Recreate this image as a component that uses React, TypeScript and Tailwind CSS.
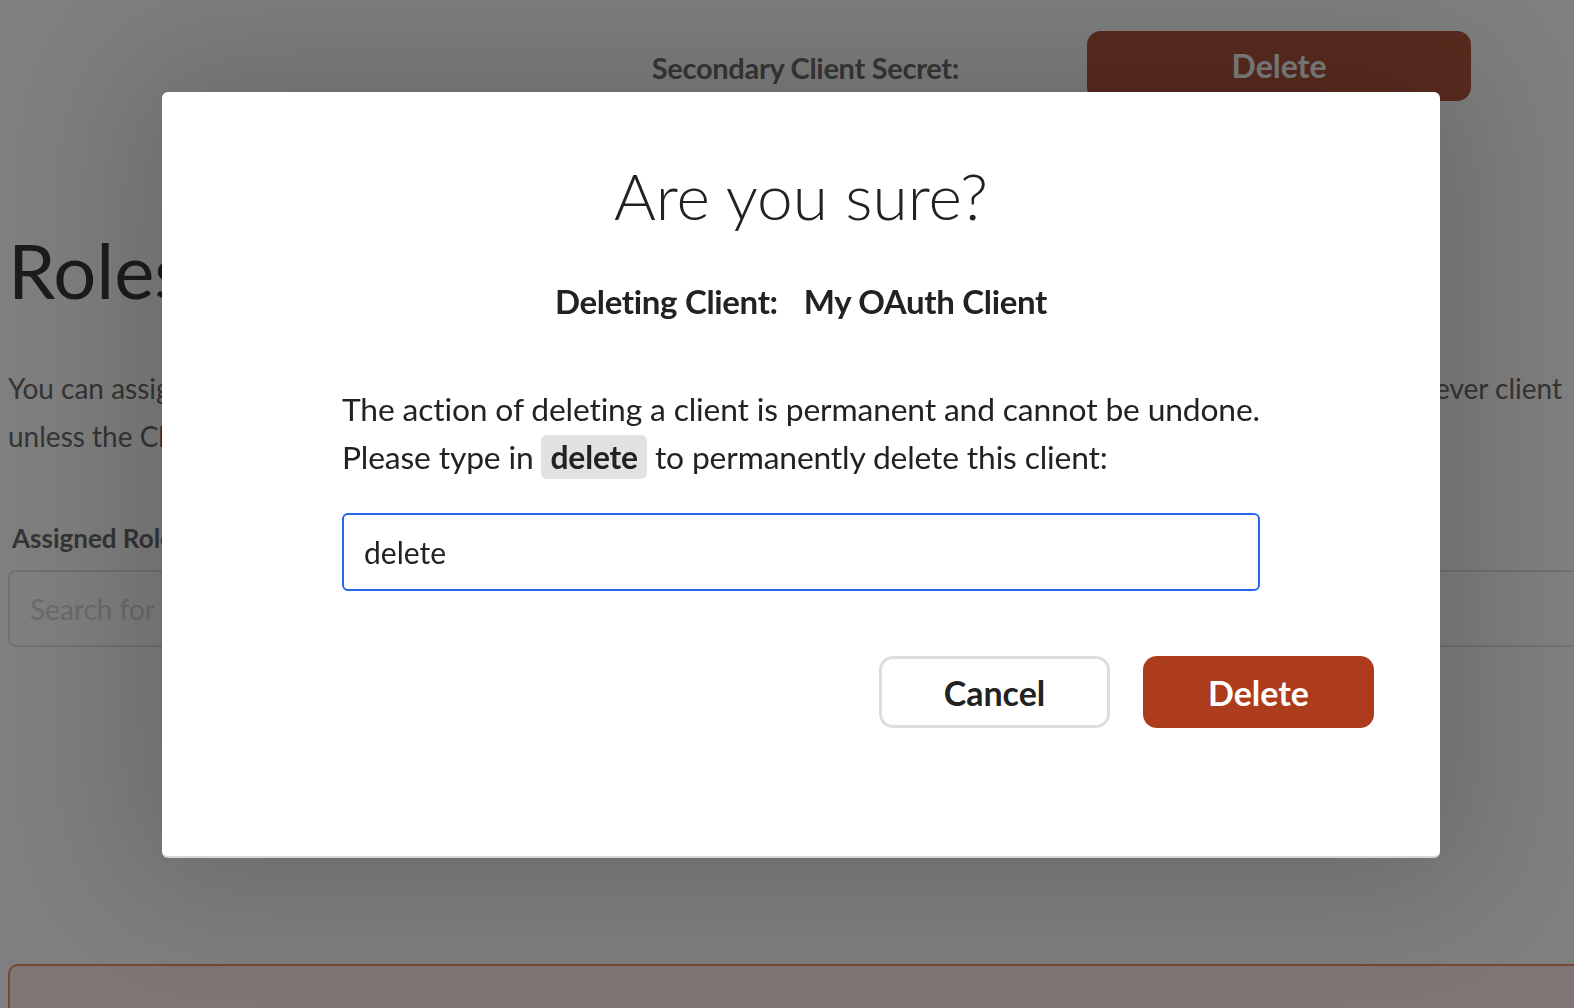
import { useState } from "react";

function BackgroundPage() {
  return (
    <div className="flex flex-col w-full h-full bg-white pl-[8px]">
      <div className="shrink-0 flex flex-row justify-end items-center gap-[128px] pr-[103px] pt-[31px]">
        <span className="text-[29px] font-[700] text-[#6e6e6e] tracking-[-0.01em] mt-[4px]">
          Secondary Client Secret:
        </span>
        <button className="w-[384px] h-[70px] rounded-[14px] bg-[#b4563e] text-white text-[32px] font-[700]">
          Delete
        </button>
      </div>
      <h1 className="shrink-0 mt-[131px] text-[76px] leading-none font-[400] text-[#383838]">
        Roles
      </h1>
      <div className="shrink-0 mt-[56px] flex flex-col text-[28px] leading-[48px] text-[#6a6a6a]">
        <div className="flex flex-row justify-between whitespace-nowrap pr-[12px]">
          <span>You can assign</span>
          <span>whenever client</span>
        </div>
        <div className="whitespace-nowrap">unless the Client</div>
      </div>
      <div className="shrink-0 mt-[59px] text-[26px] font-[700] text-[#6a6a6a] pl-[4px]">
        Assigned Roles
      </div>
      <div className="shrink-0 mt-[12px] h-[77px] w-[1600px] rounded-[8px] border-2 border-[#e2e2e2] flex items-center pl-[20px] text-[28px] text-[#d6d6d6]">
        Search for roles
      </div>
      <div className="shrink-0 mt-[317px] h-[80px] w-[1600px] rounded-[10px] border-2 border-[#f08a6c] bg-[#ffece6]" />
    </div>
  );
}

function ConfirmDelete(props: { value: string; setValue: (v: string) => void }) {
  return (
    <div className="flex flex-col w-[1278px] h-[766px] bg-white rounded-[6px] border-b-2 border-[#d8d8d8] shadow-[0_0_140px_30px_rgba(0,0,0,0.18)]">
      <div className="flex flex-col items-center px-[180px] pt-[72px]">
        <h2 className="text-[64px] leading-none font-[300] text-[#222]">
          Are you sure?
        </h2>
        <div className="mt-[57px] flex flex-row gap-[26px] text-[33px] leading-none font-[700] text-[#222] tracking-[-0.01em]">
          <span>Deleting Client:</span>
          <span>My OAuth Client</span>
        </div>
        <p className="mt-[67px] w-full text-[31.8px] leading-[48px] text-[#222] tracking-[-0.005em] whitespace-nowrap">
          The action of deleting a client is permanent and cannot be undone.
          <br />
          Please type in{" "}
          <span className="bg-[#e2e2e2] rounded-[6px] px-[9px] py-[3px] font-[700]">
            delete
          </span>{" "}
          to permanently delete this client:
        </p>
        <input
          value={props.value}
          onChange={(e) => props.setValue(e.target.value)}
          className="mt-[32px] w-full h-[78px] rounded-[6px] border-2 border-[#2467e9] px-[20px] text-[30px] text-[#222] outline-none font-[Lato,sans-serif]"
        />
      </div>
      <div className="flex flex-row justify-end gap-[33px] pr-[66px] mt-[65px]">
        <button className="w-[231px] h-[72px] rounded-[14px] border-[3px] border-[#dedede] bg-white text-[34px] font-[700] text-[#222]">
          Cancel
        </button>
        <button className="w-[231px] h-[72px] rounded-[14px] bg-[#ad3c1d] text-[34px] font-[700] text-white">
          Delete
        </button>
      </div>
    </div>
  );
}

function App() {
  const [value, setValue] = useState("delete");

  return (
    <div className="relative w-[1574px] h-[1008px] overflow-hidden font-[Lato,'Noto_Sans',sans-serif]">
      <BackgroundPage />
      <div className="absolute inset-0 bg-black/50 flex flex-col items-center pt-[92px] pl-[34px] pr-[6px] backdrop-blur-[0.5px]">
        <ConfirmDelete value={value} setValue={setValue} />
      </div>
    </div>
  );
}

export default App;
